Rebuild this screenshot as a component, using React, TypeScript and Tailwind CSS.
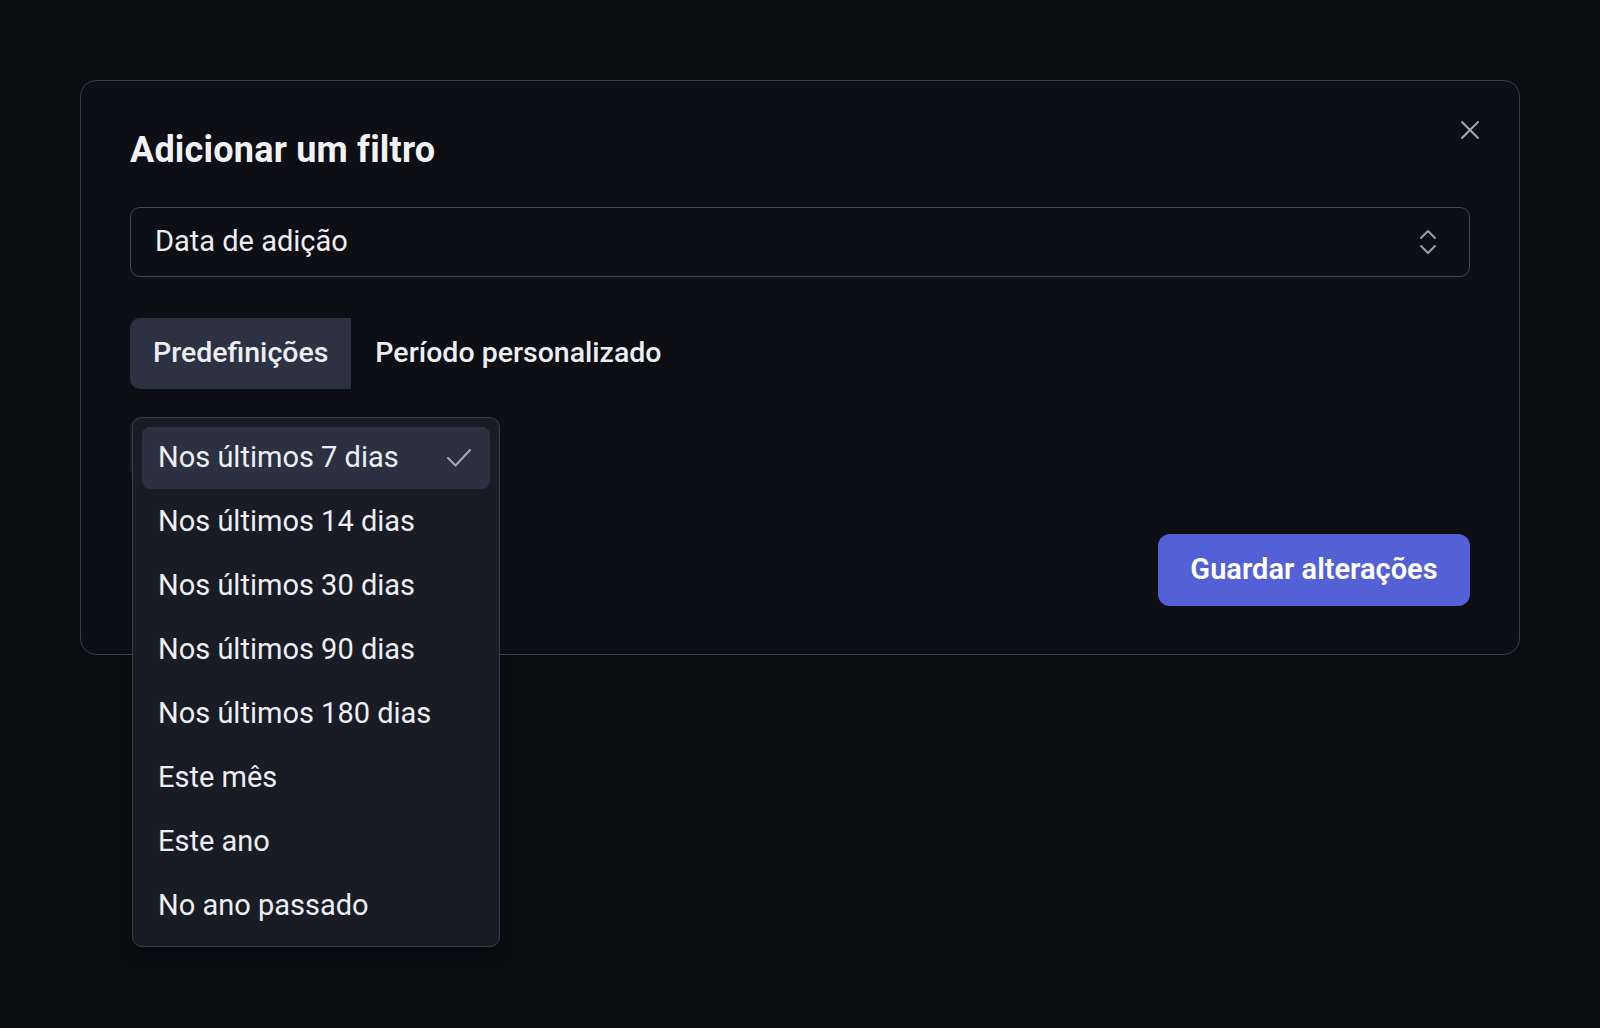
const presets = [
  "Nos últimos 7 dias",
  "Nos últimos 14 dias",
  "Nos últimos 30 dias",
  "Nos últimos 90 dias",
  "Nos últimos 180 dias",
  "Este mês",
  "Este ano",
  "No ano passado",
];

function CloseIcon() {
  return (
    <svg width="20" height="20" viewBox="0 0 20 20" fill="none" stroke="currentColor" strokeWidth="2" strokeLinecap="round">
      <path d="M2 2l16 16M18 2L2 18" />
    </svg>
  );
}

function UpDownIcon() {
  return (
    <svg width="18" height="26" viewBox="0 0 18 26" fill="none" stroke="currentColor" strokeWidth="2" strokeLinecap="round" strokeLinejoin="round">
      <path d="M2 9l7-7 7 7M2 17l7 7 7-7" />
    </svg>
  );
}

function CheckIcon() {
  return (
    <svg width="26" height="20" viewBox="0 0 26 20" fill="none" stroke="currentColor" strokeWidth="2" strokeLinecap="round" strokeLinejoin="round">
      <path d="M2 10l7.5 7.5L24 2" />
    </svg>
  );
}

export default function App() {
  const selected = presets[0];

  return (
    <div className="min-h-screen bg-[#0b0c10] pt-[80px] px-[80px] text-[#eceef3] font-['Roboto',sans-serif]">
      <div className="relative w-[1440px] rounded-[16px] border border-[#3a3d47] bg-[#0d0f14] px-[49px] pt-[48px] pb-[48px]">
        <button className="absolute top-[39px] right-[39px] text-[#a3a6ae]">
          <CloseIcon />
        </button>

        <h2 className="text-[36px] leading-[42px] font-bold tracking-[0.2px] text-[#f1f2f6]">Adicionar um filtro</h2>

        <div className="mt-[36px] h-[70px] rounded-[10px] border border-[#464953] flex items-center justify-between pl-[24px] pr-[32px]">
          <span className="text-[29px]">Data de adição</span>
          <span className="text-[#9a9da6]"><UpDownIcon /></span>
        </div>

        <div className="mt-[41px] flex">
          <div className="h-[71px] px-[23px] flex items-center rounded-l-[10px] bg-[#2c3242] text-[28.5px] font-medium">Predefinições</div>
          <div className="h-[71px] px-[24px] flex items-center text-[28.5px] font-medium">Período personalizado</div>
        </div>

        <div className="mt-[28px] flex items-start justify-between">
          <div className="relative">
            <div className="w-[368px] h-[62px] rounded-[10px] bg-[#1a1d26]" />
            <div className="absolute top-0 left-[2px] z-10 w-[368px] rounded-[10px] border border-[#3b3e48] bg-[#191c24] p-[9px] flex flex-col gap-[2px] shadow-lg">
              {presets.map((p) => (
                <div
                  key={p}
                  className={`h-[62px] rounded-[8px] pl-[16px] pr-[18px] flex items-center justify-between text-[29px] ${p === selected ? "bg-[#2c3142]" : ""}`}
                >
                  <span>{p}</span>
                  {p === selected && <span className="text-[#a6a9b3]"><CheckIcon /></span>}
                </div>
              ))}
            </div>
          </div>
          <button className="mt-[117px] w-[312px] h-[72px] rounded-[12px] bg-[#5461d6] text-white text-[29px] font-semibold">
            Guardar alterações
          </button>
        </div>
      </div>
    </div>
  );
}
